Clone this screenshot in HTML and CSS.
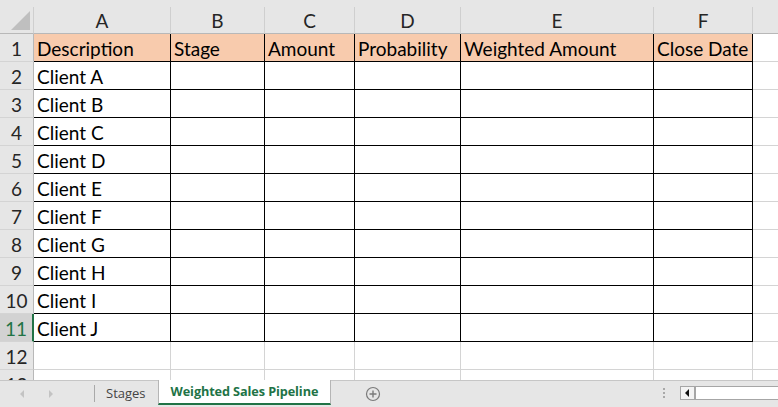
FILE: index.html
```html
<!DOCTYPE html>
<html lang="en">
<head>
<meta charset="UTF-8">
<title>Weighted Sales Pipeline</title>
<link rel="stylesheet" href="styles.css">
</head>
<body>
<div class="sheet">
  <div class="top-strip"></div>

  <div class="row col-heads">
    <div class="cell corner">
      <svg width="33" height="27" viewBox="0 0 33 27"><polygon points="11,23 30,23 30,4" fill="#bfbfbf"/></svg>
    </div>
    <div class="cell ch c-a">A</div>
    <div class="cell ch c-b">B</div>
    <div class="cell ch c-c">C</div>
    <div class="cell ch c-d">D</div>
    <div class="cell ch c-e">E</div>
    <div class="cell ch c-f">F</div>
    <div class="cell ch c-g"></div>
  </div>

  <div class="row">
    <div class="cell rh">1</div>
    <div class="cell d head c-a">Description</div>
    <div class="cell d head c-b">Stage</div>
    <div class="cell d head c-c">Amount</div>
    <div class="cell d head c-d">Probability</div>
    <div class="cell d head c-e">Weighted Amount</div>
    <div class="cell d head c-f">Close Date</div>
    <div class="cell e c-g"></div>
  </div>

  <div class="row">
    <div class="cell rh">2</div>
    <div class="cell d c-a">Client A</div>
    <div class="cell d c-b"></div><div class="cell d c-c"></div><div class="cell d c-d"></div><div class="cell d c-e"></div><div class="cell d c-f"></div>
    <div class="cell e c-g"></div>
  </div>
  <div class="row">
    <div class="cell rh">3</div>
    <div class="cell d c-a">Client B</div>
    <div class="cell d c-b"></div><div class="cell d c-c"></div><div class="cell d c-d"></div><div class="cell d c-e"></div><div class="cell d c-f"></div>
    <div class="cell e c-g"></div>
  </div>
  <div class="row">
    <div class="cell rh">4</div>
    <div class="cell d c-a">Client C</div>
    <div class="cell d c-b"></div><div class="cell d c-c"></div><div class="cell d c-d"></div><div class="cell d c-e"></div><div class="cell d c-f"></div>
    <div class="cell e c-g"></div>
  </div>
  <div class="row">
    <div class="cell rh">5</div>
    <div class="cell d c-a">Client D</div>
    <div class="cell d c-b"></div><div class="cell d c-c"></div><div class="cell d c-d"></div><div class="cell d c-e"></div><div class="cell d c-f"></div>
    <div class="cell e c-g"></div>
  </div>
  <div class="row">
    <div class="cell rh">6</div>
    <div class="cell d c-a">Client E</div>
    <div class="cell d c-b"></div><div class="cell d c-c"></div><div class="cell d c-d"></div><div class="cell d c-e"></div><div class="cell d c-f"></div>
    <div class="cell e c-g"></div>
  </div>
  <div class="row">
    <div class="cell rh">7</div>
    <div class="cell d c-a">Client F</div>
    <div class="cell d c-b"></div><div class="cell d c-c"></div><div class="cell d c-d"></div><div class="cell d c-e"></div><div class="cell d c-f"></div>
    <div class="cell e c-g"></div>
  </div>
  <div class="row">
    <div class="cell rh">8</div>
    <div class="cell d c-a">Client G</div>
    <div class="cell d c-b"></div><div class="cell d c-c"></div><div class="cell d c-d"></div><div class="cell d c-e"></div><div class="cell d c-f"></div>
    <div class="cell e c-g"></div>
  </div>
  <div class="row">
    <div class="cell rh">9</div>
    <div class="cell d c-a">Client H</div>
    <div class="cell d c-b"></div><div class="cell d c-c"></div><div class="cell d c-d"></div><div class="cell d c-e"></div><div class="cell d c-f"></div>
    <div class="cell e c-g"></div>
  </div>
  <div class="row">
    <div class="cell rh">10</div>
    <div class="cell d c-a">Client I</div>
    <div class="cell d c-b"></div><div class="cell d c-c"></div><div class="cell d c-d"></div><div class="cell d c-e"></div><div class="cell d c-f"></div>
    <div class="cell e c-g"></div>
  </div>
  <div class="row">
    <div class="cell rh active">11</div>
    <div class="cell d c-a">Client J</div>
    <div class="cell d c-b"></div><div class="cell d c-c"></div><div class="cell d c-d"></div><div class="cell d c-e"></div><div class="cell d c-f"></div>
    <div class="cell e c-g"></div>
  </div>

  <div class="row">
    <div class="cell rh">12</div>
    <div class="cell e c-a"></div><div class="cell e c-b"></div><div class="cell e c-c"></div><div class="cell e c-d"></div><div class="cell e c-e"></div><div class="cell e c-f"></div><div class="cell e c-g"></div>
  </div>
  <div class="row">
    <div class="cell rh">13</div>
    <div class="cell e c-a"></div><div class="cell e c-b"></div><div class="cell e c-c"></div><div class="cell e c-d"></div><div class="cell e c-e"></div><div class="cell e c-f"></div><div class="cell e c-g"></div>
  </div>
</div>

<div class="tabbar">
  <div class="nav">
    <svg width="8" height="10" viewBox="0 0 8 10"><polygon points="6,1 6,9 2,5" fill="#c3c3c3"/></svg>
    <svg width="8" height="10" viewBox="0 0 8 10"><polygon points="2,1 2,9 6,5" fill="#c3c3c3"/></svg>
  </div>
  <div class="tab">Stages</div>
  <div class="tab current">Weighted Sales Pipeline</div>
  <div class="add">
    <svg width="16" height="16" viewBox="0 0 16 16">
      <circle cx="8" cy="8" r="6.5" fill="none" stroke="#7a7a7a" stroke-width="1.2"/>
      <path d="M8 4.5v7M4.5 8h7" stroke="#7a7a7a" stroke-width="1.4"/>
    </svg>
  </div>
  <div class="grip"><span></span><span></span><span></span></div>
  <div class="hscroll">
    <div class="arrow"><svg width="6" height="8" viewBox="0 0 6 8"><polygon points="5,0 5,8 1,4" fill="#111"/></svg></div>
    <div class="track"></div>
  </div>
</div>
</body>
</html>
```

FILE: styles.css
```css
body {
  margin: 0;
  width: 778px;
  height: 407px;
  overflow: hidden;
  background: #ffffff;
  font-family: Lato, "Liberation Sans", sans-serif;
  color: #000;
}

.sheet {
  height: 380px;
  overflow: hidden;
}

.top-strip {
  height: 7px;
  background: #e6e6e6;
}

.row {
  display: flex;
  height: 28px;
}

.cell {
  box-sizing: border-box;
  height: 28px;
  border-right: 1px solid #d4d4d4;
  border-bottom: 1px solid #d4d4d4;
  font-size: 19px;
  flex-shrink: 0;
  overflow: hidden;
  white-space: nowrap;
}

/* column widths include the right border line */
.rh, .corner { width: 34px; }
.c-a { width: 137px; }
.c-b { width: 94px; }
.c-c { width: 90px; }
.c-d { width: 106px; }
.c-e { width: 193px; }
.c-f { width: 99px; }
.c-g { width: 40px; }

.col-heads {
  height: 27px;
}

.col-heads .cell {
  height: 27px;
  background: #e6e6e6;
  border-right-color: #cfcfcf;
  border-bottom-color: #b8b8b8;
}

.corner {
  padding: 0;
}

.corner svg {
  display: block;
}

.ch {
  display: flex;
  align-items: center;
  justify-content: center;
  color: #262626;
  padding-top: 1px;
}

.rh {
  display: flex;
  align-items: center;
  justify-content: center;
  background: #e6e6e6;
  color: #262626;
  border-right-color: #b8b8b8;
  border-bottom-color: #d4d4d4;
  padding-top: 2px;
}

.rh.active {
  background: #d2d2d2;
  color: #217346;
  border-right: 2px solid #217346;
}

.d {
  display: flex;
  align-items: flex-end;
  padding: 0 0 1px 3px;
  border-right-color: #000;
  border-bottom-color: #000;
}

.d.head {
  background: #f8cbad;
}

.tabbar {
  box-sizing: border-box;
  height: 27px;
  background: #e6e6e6;
  border-top: 1px solid #c6c6c6;
  display: flex;
  align-items: stretch;
  font-family: "Open Sans", "Noto Sans", sans-serif;
  font-size: 13px;
}

.nav {
  width: 95px;
  display: flex;
  align-items: center;
  gap: 21px;
  padding-left: 18px;
  box-sizing: border-box;
  border-right: 1px solid #a9a9a9;
  margin: 4px 0 5px;
}

.nav svg {
  display: block;
}

.tab {
  display: flex;
  align-items: center;
  padding: 0 12px 2px 11px;
  color: #444;
}

.tab.current {
  box-sizing: border-box;
  width: 173px;
  margin-top: -1px;
  margin-bottom: 2px;
  padding: 0 0 1px 12px;
  background: #ffffff;
  border-left: 1px solid #b5b5b5;
  border-right: 1px solid #b5b5b5;
  border-bottom: 2px solid #217346;
  color: #217346;
  font-weight: bold;
  font-size: 12.7px;
  letter-spacing: -0.1px;
}

.add {
  display: flex;
  align-items: center;
  padding-left: 34px;
  width: 325px;
  box-sizing: border-box;
}

.add svg {
  display: block;
}

.grip {
  display: flex;
  flex-direction: column;
  justify-content: center;
  gap: 2px;
  width: 24px;
  box-sizing: border-box;
  padding: 0 0 2px 7px;
}

.grip span {
  display: block;
  width: 2px;
  height: 2px;
  background: #a8a8a8;
}

.hscroll {
  display: flex;
  align-self: center;
  box-sizing: border-box;
  height: 14px;
  margin-bottom: 2px;
  flex: 1;
  border: 1px solid #a6a6a6;
  border-right: none;
  background: #ffffff;
}

.hscroll .arrow {
  width: 13px;
  display: flex;
  align-items: center;
  justify-content: center;
  border-right: 2px solid #a6a6a6;
  background: #f4f4f4;
}

.hscroll .arrow svg {
  display: block;
}

.track {
  flex: 1;
}
```
